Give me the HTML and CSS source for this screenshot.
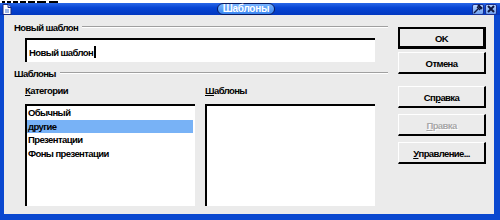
FILE: index.html
```html
<!DOCTYPE html>
<html lang="ru">
<head>
    <meta charset="UTF-8">
    <title>Шаблоны</title>
    <link rel="stylesheet" href="styles.css">
</head>
<body>
    <div class="behind"></div>
    <div class="window">
        <div class="title-bar">
            <div class="title-icon">
                <svg width="10" height="11" viewBox="0 0 10 11">
                    <path d="M1 0.5h5l3 3v7H1z" fill="#ffffff" stroke="#1a2a80"/>
                    <path d="M6 0.5v3h3" fill="#c8d8f8" stroke="#1a2a80"/>
                    <path d="M3 6h4M3 8h4" stroke="#4070d0"/>
                </svg>
            </div>
            <div class="title-center">
                <span class="title-pill">Шаблоны</span>
            </div>
            <div class="title-buttons">
                <div class="title-btn">
                    <svg width="10" height="10" viewBox="0 0 10 10">
                        <path d="M1 9l4-4" stroke="#101840" stroke-width="1.5"/>
                        <path d="M4 3l3 3M5 2l3 3 1-1-3-3z" stroke="#101840" stroke-width="1.2" fill="#101840"/>
                    </svg>
                </div>
                <div class="title-btn">
                    <svg width="10" height="10" viewBox="0 0 10 10">
                        <path d="M2 2l6 6M8 2l-6 6" stroke="#101840" stroke-width="2"/>
                    </svg>
                </div>
            </div>
        </div>

        <div class="dialog-body">
            <div class="main">
                <div class="group-head">
                    <span>Новый шаблон</span>
                    <div class="group-line"></div>
                </div>
                <div class="name-input">Новый шаблон<span class="caret"></span></div>

                <div class="group-head second">
                    <span>Шаблоны</span>
                    <div class="group-line"></div>
                </div>

                <div class="lists">
                    <div class="list-col">
                        <div class="list-label"><u>К</u>атегории</div>
                        <div class="list-box">
                            <div class="list-item">Обычный</div>
                            <div class="list-item selected">другие</div>
                            <div class="list-item">Презентации</div>
                            <div class="list-item">Фоны презентации</div>
                        </div>
                    </div>
                    <div class="list-col">
                        <div class="list-label"><u>Ш</u>аблоны</div>
                        <div class="list-box"></div>
                    </div>
                </div>
            </div>

            <div class="buttons">
                <div class="btn btn-default">OK</div>
                <div class="btn btn-cancel">Отмена</div>
                <div class="btn btn-help">Сп<u>р</u>авка</div>
                <div class="btn btn-edit disabled"><u>П</u>равка</div>
                <div class="btn btn-manage"><u>У</u>правление...</div>
            </div>
        </div>
    </div>
</body>
</html>
```

FILE: styles.css
```css
* {
    margin: 0;
    padding: 0;
    box-sizing: border-box;
}

body {
    width: 500px;
    height: 220px;
    overflow: hidden;
    background-color: #ffffff;
    font-family: 'Liberation Sans', Arial, sans-serif;
    font-size: 9.5px;
    font-weight: bold;
    letter-spacing: -0.6px;
    color: #000000;
}

/* низ текста окна, которое лежит позади диалога */
.behind {
    height: 3px;
    background:
        linear-gradient(90deg, #000 0 3px, transparent 3px 5px, #000 5px 9px, transparent 9px 11px,
            #000 11px 16px, transparent 16px 18px, #000 18px 24px, transparent 24px 26px,
            #000 26px 33px, transparent 33px 35px, #000 35px 44px, transparent 44px 47px,
            #000 47px 56px, transparent 56px) 2px 1px / 60px 2px no-repeat,
        #ffffff;
}

.window {
    height: 217px;
    display: flex;
    flex-direction: column;
    background-color: #ebebeb;
    border-left: 4px solid #0a48d0;
    border-right: 6px solid #0a48d0;
    border-bottom: 6px solid #0a48d0;
}

.title-bar {
    height: 12px;
    display: flex;
    align-items: center;
    background: linear-gradient(#2a68e8, #0644d4 40%, #0238c0);
    margin-left: -4px;
    margin-right: -6px;
}

.title-icon {
    width: 14px;
    height: 12px;
    display: flex;
    align-items: center;
    justify-content: center;
}

.title-center {
    flex: 1;
    display: flex;
    justify-content: center;
    padding-left: 6px;
}

.title-pill {
    height: 12px;
    line-height: 10px;
    padding: 0 5px;
    border: 1px solid #0a1a60;
    border-radius: 6px;
    background: linear-gradient(#78b4ff, #3a86f0);
    color: #ffffff;
    font-size: 10px;
    letter-spacing: -0.3px;
}

.title-buttons {
    display: flex;
    gap: 1px;
    padding-right: 3px;
}

.title-btn {
    width: 12px;
    height: 11px;
    display: flex;
    align-items: center;
    justify-content: center;
    background: linear-gradient(#b8d4ff, #6c9ef0);
    border: 1px solid #1a3090;
    border-radius: 2px;
}

.dialog-body {
    flex: 1;
    display: flex;
}

.main {
    width: 384px;
    padding-left: 10px;
}

.group-head {
    height: 14px;
    margin-top: 5px;
    display: flex;
    align-items: center;
}

.group-head.second {
    margin-top: 4px;
}

.group-line {
    flex: 1;
    margin-left: 4px;
    height: 2px;
    border-top: 1px solid #a0a0a0;
    border-bottom: 1px solid #ffffff;
}

.name-input {
    margin-top: 4px;
    margin-left: 11px;
    width: 350px;
    height: 24px;
    display: flex;
    align-items: center;
    padding-left: 2px;
    padding-top: 2px;
    background-color: #ffffff;
    border-top: 2px solid #000000;
    border-left: 2px solid #000000;
}

.caret {
    display: inline-block;
    width: 2px;
    height: 12px;
    margin-left: 1px;
    background-color: #000000;
}

.lists {
    display: flex;
    gap: 10px;
    margin-top: 4px;
    margin-left: 11px;
}

.list-col {
    width: 170px;
}

.list-label {
    height: 14px;
    line-height: 14px;
}

.list-box {
    margin-top: 6px;
    height: 102px;
    background-color: #ffffff;
    border-top: 2px solid #000000;
    border-left: 2px solid #000000;
}

.list-item {
    height: 13.5px;
    line-height: 13.5px;
    padding-left: 1px;
    margin-right: 2px;
}

.list-item.selected {
    background-color: #78b2f6;
}

.buttons {
    width: 88px;
    margin-left: 10px;
    padding-top: 12px;
    display: flex;
    flex-direction: column;
}

.btn {
    height: 22px;
    display: flex;
    align-items: center;
    justify-content: center;
    padding-top: 1px;
    border-top: 1px solid #ffffff;
    border-left: 1px solid #ffffff;
    border-right: 2px solid #000000;
    border-bottom: 2px solid #000000;
}

.btn-default {
    border: 2px solid #000000;
    border-right-width: 3px;
    border-bottom-width: 3px;
}

.btn-cancel {
    margin-top: 3px;
}

.btn-help {
    margin-top: 12px;
}

.btn-edit {
    margin-top: 6px;
}

.btn-manage {
    margin-top: 6px;
}

.btn.disabled {
    color: #a8a8a8;
    text-shadow: 1px 1px 0 #ffffff;
}
```
